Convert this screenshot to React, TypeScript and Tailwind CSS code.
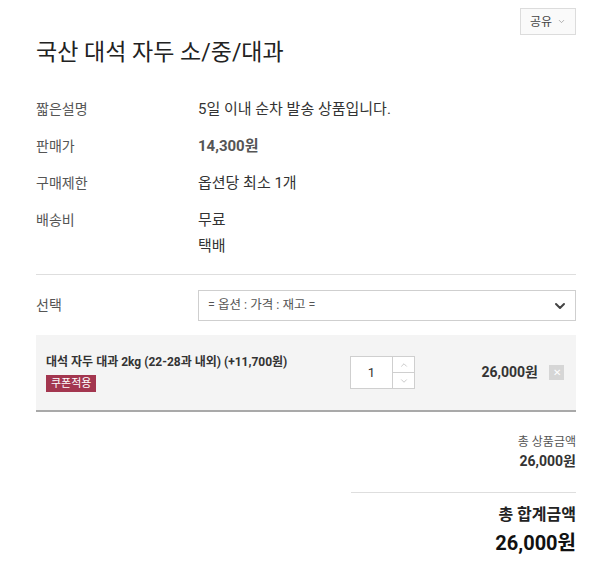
import { ChevronDown, ChevronUp } from "lucide-react";

const font = "font-['Roboto','Noto_Sans_CJK_KR',sans-serif]";

function InfoRow({ label, children }: { label: string; children: React.ReactNode }) {
  return (
    <div className="flex py-[8px] leading-[21px]">
      <div className="w-[162px] shrink-0 text-[14px] text-[#555]">{label}</div>
      <div className="text-[15px] text-[#333]">{children}</div>
    </div>
  );
}

export default function App() {
  return (
    <div className={`w-[600px] h-[566px] bg-white pl-[36px] pr-[24px] ${font}`}>
      <div className="flex justify-end pt-[8px]">
        <button className="flex h-[27px] w-[56px] items-center justify-center gap-[5px] border border-[#dcdcdc] bg-[#fafafa] text-[12px] text-[#444]">
          공유
          <ChevronDown size={9} strokeWidth={2} className="text-[#999]" />
        </button>
      </div>

      <h1 className="mt-[3px] text-[23px] leading-[30px] text-[#222]">국산 대석 자두 소/중/대과</h1>

      <div className="mt-[23px]">
        <InfoRow label="짧은설명">5일 이내 순차 발송 상품입니다.</InfoRow>
        <InfoRow label="판매가">
          <span className="font-bold text-[#555]">14,300원</span>
        </InfoRow>
        <InfoRow label="구매제한">옵션당 최소 1개</InfoRow>
        <div className="flex pt-[8px] leading-[21px]">
          <div className="w-[162px] shrink-0 text-[14px] text-[#555]">배송비</div>
          <div className="text-[15px] text-[#333]">
            <div>무료</div>
            <div className="mt-[5px]">택배</div>
          </div>
        </div>
      </div>

      <div className="mt-[17px] border-t border-[#dedede]" />

      <div className="flex items-center pt-[15px]">
        <div className="w-[162px] shrink-0 text-[14px] text-[#555]">선택</div>
        <div className="flex h-[31px] flex-1 items-center justify-between border border-[#cfcfcf] bg-white pl-[9px] pr-[7px] text-[12.5px] text-[#555]">
          <span>= 옵션 : 가격 : 재고 =</span>
          <ChevronDown size={16} strokeWidth={3} className="text-[#444]" />
        </div>
      </div>

      <div className="mt-[14px] flex h-[77px] items-center border-b-2 border-[#a9a9a9] bg-[#f4f4f4] pl-[10px] pr-[12px]">
        <div className="flex-1 pt-[2px]">
          <div className="text-[12px] font-bold leading-[16px] text-[#333]">대석 자두 대과 2kg (22-28과 내외) (+11,700원)</div>
          <div className="mt-[2px] inline-block bg-[#a3364f] px-[5px] text-[11px] leading-[17px] text-white">쿠폰적용</div>
        </div>
        <div className="flex h-[33px] w-[65px] border border-[#cfcfcf] bg-white">
          <div className="flex w-[42px] items-center justify-center border-r border-[#cfcfcf] text-[13px] text-[#333]">1</div>
          <div className="flex flex-1 flex-col">
            <div className="flex flex-1 items-center justify-center border-b border-[#cfcfcf] text-[#aaa]">
              <ChevronUp size={10} strokeWidth={1.5} />
            </div>
            <div className="flex flex-1 items-center justify-center text-[#aaa]">
              <ChevronDown size={10} strokeWidth={1.5} />
            </div>
          </div>
        </div>
        <div className="w-[123px] text-right text-[14px] font-bold text-[#333]">26,000원</div>
        <div className="ml-[11px] flex h-[15px] w-[15px] items-center justify-center bg-[#d6d6d6] text-[10px] leading-none text-white">✕</div>
      </div>

      <div className="flex flex-col items-end pt-[21px]">
        <div className="text-[12px] leading-[18px] text-[#555]">총 상품금액</div>
        <div className="text-[14px] font-bold leading-[20px] text-[#333]">26,000원</div>
        <div className="mt-[21px] w-[225px] border-t border-[#dedede]" />
        <div className="mt-[11px] text-[16px] font-bold leading-[22px] text-[#222]">총 합계금액</div>
        <div className="mt-[2px] text-[20px] font-bold leading-[30px] text-[#111]">26,000원</div>
      </div>
    </div>
  );
}
